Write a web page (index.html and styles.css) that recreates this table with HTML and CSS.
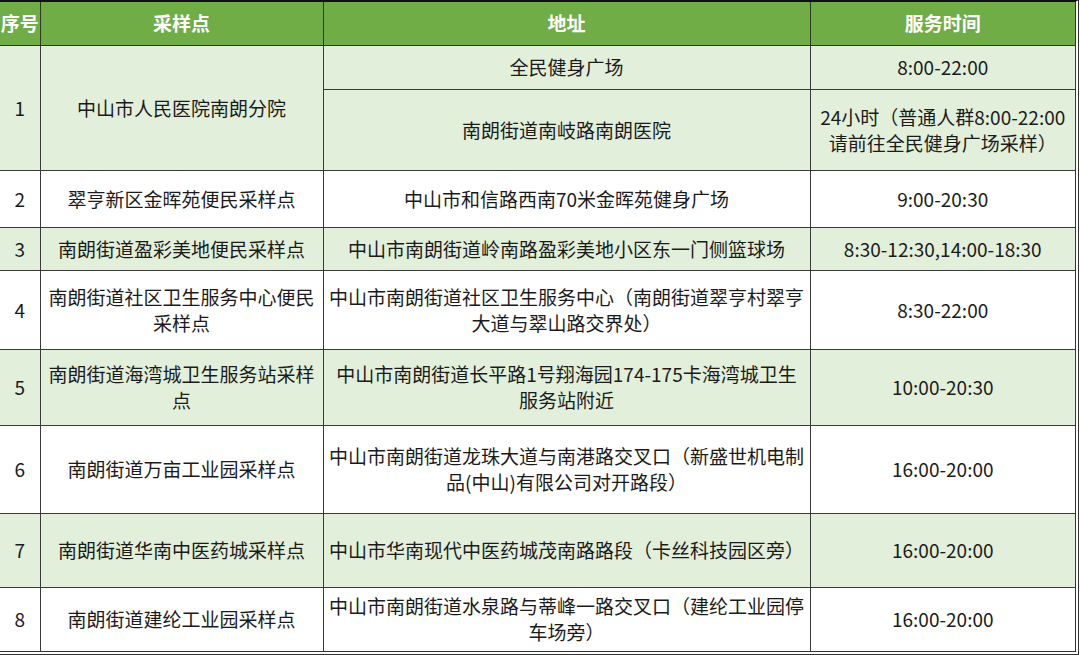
FILE: index.html
```html
<!DOCTYPE html>
<html lang="zh">
<head>
<meta charset="utf-8">
<title>采样点</title>
<link rel="stylesheet" href="styles.css">
</head>
<body>
<div class="frame">
<table class="sites">
<colgroup>
<col class="c-no"><col class="c-name"><col class="c-addr"><col class="c-time">
</colgroup>
<thead>
<tr class="r-head"><th>序号</th><th>采样点</th><th>地址</th><th>服务时间</th></tr>
</thead>
<tbody>
<tr class="green r-1a"><td rowspan="2">1</td><td rowspan="2">中山市人民医院南朗分院</td><td>全民健身广场</td><td>8:00-22:00</td></tr>
<tr class="green r-1b"><td>南朗街道南岐路南朗医院</td><td>24小时（普通人群8:00-22:00<br>请前往全民健身广场采样）</td></tr>
<tr class="white r-2"><td>2</td><td>翠亨新区金晖苑便民采样点</td><td>中山市和信路西南70米金晖苑健身广场</td><td>9:00-20:30</td></tr>
<tr class="green r-3"><td>3</td><td>南朗街道盈彩美地便民采样点</td><td>中山市南朗街道岭南路盈彩美地小区东一门侧篮球场</td><td>8:30-12:30,14:00-18:30</td></tr>
<tr class="white r-4"><td>4</td><td>南朗街道社区卫生服务中心便民<br>采样点</td><td>中山市南朗街道社区卫生服务中心（南朗街道翠亨村翠亨<br>大道与翠山路交界处）</td><td>8:30-22:00</td></tr>
<tr class="green r-5"><td>5</td><td>南朗街道海湾城卫生服务站采样<br>点</td><td>中山市南朗街道长平路1号翔海园174-175卡海湾城卫生<br>服务站附近</td><td>10:00-20:30</td></tr>
<tr class="white r-6"><td>6</td><td>南朗街道万亩工业园采样点</td><td>中山市南朗街道龙珠大道与南港路交叉口（新盛世机电制<br>品(中山)有限公司对开路段）</td><td>16:00-20:00</td></tr>
<tr class="green r-7"><td>7</td><td>南朗街道华南中医药城采样点</td><td>中山市华南现代中医药城茂南路路段（卡丝科技园区旁）</td><td>16:00-20:00</td></tr>
<tr class="white r-8"><td>8</td><td>南朗街道建纶工业园采样点</td><td>中山市南朗街道水泉路与蒂峰一路交叉口（建纶工业园停<br>车场旁）</td><td>16:00-20:00</td></tr>
</tbody>
</table>
</div>
</body>
</html>
```
FILE: styles.css
```css
html, body {
  margin: 0;
  padding: 0;
  background: #ffffff;
}
.frame {
  width: 1075px;
  border-top: 2px solid #111;
  border-right: 4px double #333;
  border-bottom: 4px double #333;
  border-left: 0;
  background: #fff;
}
.sites {
  width: 1075px;
  border-collapse: collapse;
  table-layout: fixed;
  font-family: "Noto Sans CJK SC", "Noto Sans", sans-serif;
  font-size: 19px;
  line-height: 26px;
  color: #1b1b1b;
}
.c-no { width: 40px; }
.c-name { width: 283px; }
.c-addr { width: 487px; }
.c-time { width: 265px; }
.sites th, .sites td {
  border: 1px solid #3a3a3a;
  text-align: center;
  vertical-align: middle;
  padding: 0 2px;
  white-space: nowrap;
}
.sites th {
  background: #70ad47;
  color: #ffffff;
  font-weight: bold;
  font-size: 19px;
  border-color: #2c3a20;
  padding: 0;
}
.sites tr > :first-child { border-left: 0; }
.sites tr > :last-child { border-right: 0; }
.sites thead th { border-top: 0; }
.sites tbody tr:last-child td { border-bottom: 0; }
.green td { background: #e2efda; }
.white td { background: #ffffff; }
.r-head { height: 43px; }
.r-1a { height: 44px; }
.r-1b { height: 81px; }
.r-2 { height: 57px; }
.r-3 { height: 43px; }
.r-4 { height: 79px; }
.r-5 { height: 76px; }
.r-6 { height: 88px; }
.r-7 { height: 74px; }
.r-8 { height: 64px; }
```
